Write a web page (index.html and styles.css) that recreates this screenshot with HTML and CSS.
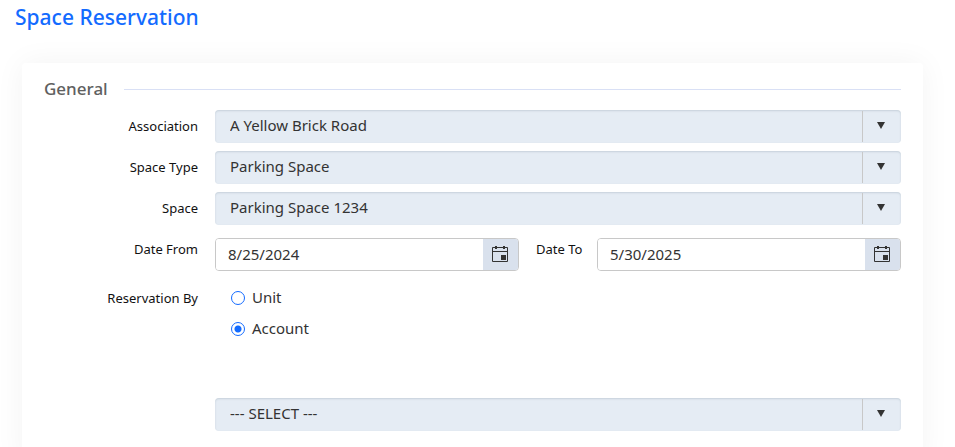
FILE: index.html
```html
<!DOCTYPE html>
<html lang="en">
<head>
    <meta charset="utf-8">
    <title>Space Reservation</title>
    <link rel="stylesheet" href="styles.css">
</head>
<body>
    <h1>Space Reservation</h1>

    <form class="card">
        <div class="section-header">
            <h2>General</h2>
            <span class="line"></span>
        </div>

        <div class="form-row">
            <label for="association">Association</label>
            <div class="dropdown">
                <select id="association"><option>A Yellow Brick Road</option></select>
            </div>
        </div>

        <div class="form-row">
            <label for="spaceType">Space Type</label>
            <div class="dropdown">
                <select id="spaceType"><option>Parking Space</option></select>
            </div>
        </div>

        <div class="form-row">
            <label for="space">Space</label>
            <div class="dropdown">
                <select id="space"><option>Parking Space 1234</option></select>
            </div>
        </div>

        <div class="form-row date-row">
            <label for="dateFrom">Date From</label>
            <div class="date-range">
                <div class="date-picker">
                    <input type="text" id="dateFrom" value="8/25/2024">
                    <button type="button" aria-label="Open calendar">
                        <svg width="16" height="18" viewBox="0 0 16 18">
                            <path d="M.5 2.5h15v14H.5zM.5 6.5h15" fill="none" stroke="#333"/>
                            <path d="M3 1h2v3H3zM11 1h2v3h-2zM9 10h5v5H9z" fill="#333"/>
                        </svg>
                    </button>
                </div>
                <label for="dateTo">Date To</label>
                <div class="date-picker">
                    <input type="text" id="dateTo" value="5/30/2025">
                    <button type="button" aria-label="Open calendar">
                        <svg width="16" height="18" viewBox="0 0 16 18">
                            <path d="M.5 2.5h15v14H.5zM.5 6.5h15" fill="none" stroke="#333"/>
                            <path d="M3 1h2v3H3zM11 1h2v3h-2zM9 10h5v5H9z" fill="#333"/>
                        </svg>
                    </button>
                </div>
            </div>
        </div>

        <div class="form-row radio-row" role="radiogroup" aria-labelledby="reservationBy">
            <span class="form-label" id="reservationBy">Reservation By</span>
            <div class="radio-list">
                <label><input type="radio" name="reservationBy" value="unit">Unit</label>
                <label><input type="radio" name="reservationBy" value="account" checked>Account</label>
            </div>
        </div>

        <div class="form-row account-row">
            <span class="form-label"></span>
            <div class="dropdown">
                <select id="account" aria-label="Account"><option>--- SELECT ---</option></select>
            </div>
        </div>
    </form>
</body>
</html>
```

FILE: styles.css
```css
* {
    box-sizing: border-box;
}
body {
    margin: 0;
    font-family: "Noto Sans", "Open Sans", sans-serif;
    font-size: 15px;
    color: #333;
    background-color: #fff;
    overflow-x: hidden;
}
h1 {
    margin: 4px 15px 32px;
    font-size: 21px;
    line-height: 27px;
    font-weight: 500;
    color: #136bff;
}
.card {
    margin: 0 32px 0 22px;
    padding: 14px 22px 24px;
    background-color: #fff;
    border-radius: 4px;
    box-shadow: 0 0 30px rgba(0, 0, 0, 0.05);
}
.section-header {
    display: flex;
    align-items: center;
    gap: 16px;
    margin-bottom: 9px;
}
h2 {
    margin: 0;
    font-size: 17px;
    line-height: 24px;
    font-weight: 500;
    color: #606060;
}
.line {
    flex: 1;
    height: 1px;
    background-color: #d9e0f5;
}
.form-row {
    display: grid;
    grid-template-columns: 154px 1fr;
    column-gap: 17px;
    align-items: center;
    margin-bottom: 8px;
}
.form-row > label,
.form-label,
.date-range > label {
    padding-bottom: 2px;
    font-size: 13px;
    line-height: 22px;
    text-align: right;
    white-space: nowrap;
    color: #111;
}

/* drop-downs */
.dropdown {
    position: relative;
}
.dropdown select {
    display: block;
    width: 100%;
    height: 33px;
    padding: 0 50px 4px 15px;
    font: inherit;
    color: #333;
    background-color: #e5ecf4;
    border: none;
    border-radius: 4px;
    box-shadow: inset 0 1px 2px rgba(40, 60, 90, 0.16);
    appearance: none;
}
.dropdown::before {
    content: "";
    position: absolute;
    top: 1px;
    bottom: 1px;
    right: 38px;
    width: 1px;
    background-color: #c8c8c8;
}
.dropdown::after {
    content: "";
    position: absolute;
    top: 12px;
    right: 16px;
    border: solid transparent;
    border-width: 7px 4px 0;
    border-top-color: #333;
    pointer-events: none;
}

/* dates */
.date-row {
    margin-top: 13px;
    align-items: start;
}
.date-range {
    display: grid;
    grid-template-columns: 1fr 44px 1fr;
    column-gap: 17px;
    align-items: start;
}
.date-picker {
    display: flex;
    height: 33px;
    border: 1px solid #c8c8c8;
    border-radius: 4px;
    overflow: hidden;
}
.date-picker input {
    flex: 1;
    min-width: 0;
    padding: 0 12px 2px;
    font: inherit;
    color: #333;
    border: none;
    outline: none;
}
.date-picker button {
    display: flex;
    align-items: center;
    justify-content: center;
    width: 35px;
    padding: 0 1px 2px 0;
    border: none;
    background-color: #d9e1ed;
}

/* radios */
.radio-row {
    align-items: start;
    margin-top: 16px;
    margin-bottom: 59px;
}
.radio-list {
    display: flex;
    flex-direction: column;
    align-items: flex-start;
    gap: 10px;
    padding-left: 16px;
}
.radio-list label {
    display: flex;
    align-items: center;
    gap: 7px;
    line-height: 21px;
}
.radio-list input {
    width: 14px;
    height: 14px;
    margin: 0;
    border: 1px solid #136bff;
    border-radius: 50%;
    appearance: none;
}
.radio-list input:checked {
    background: radial-gradient(circle, #136bff 3px, transparent 4px);
}
```
